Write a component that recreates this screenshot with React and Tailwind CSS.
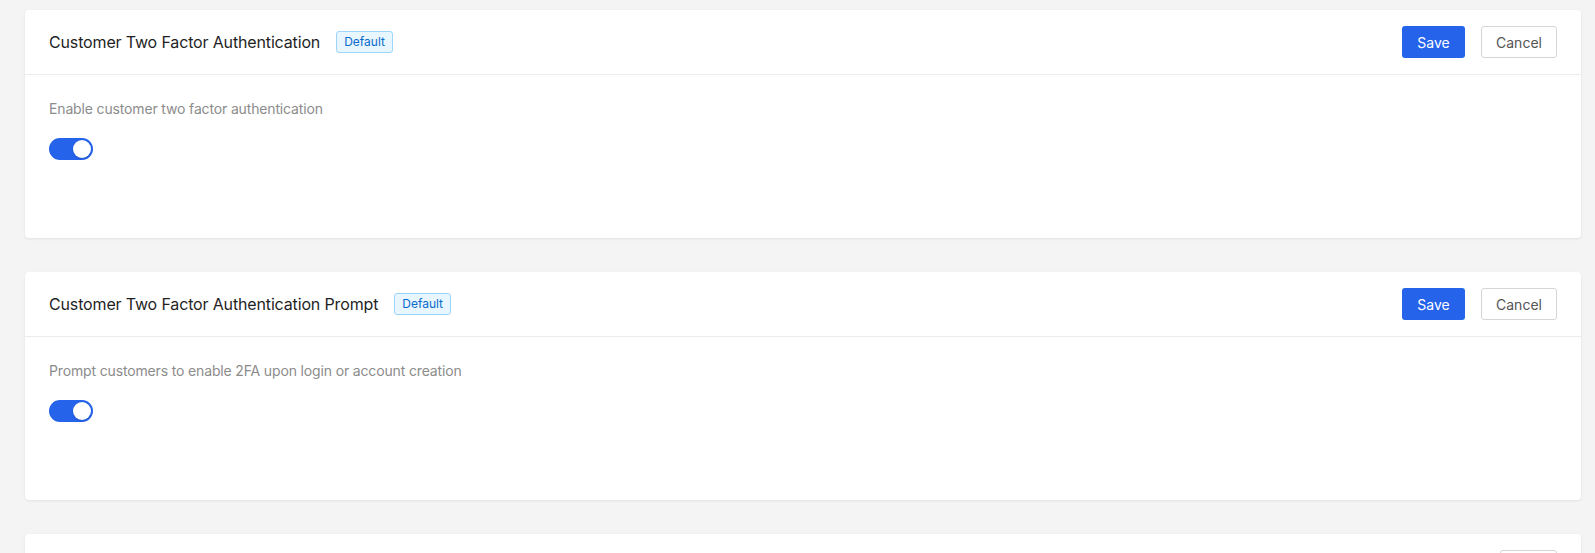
import React, { useState } from "react";

const settings = [
  {
    id: "customer_2fa",
    title: "Customer Two Factor Authentication",
    description: "Enable customer two factor authentication",
    editing: true,
  },
  {
    id: "customer_2fa_prompt",
    title: "Customer Two Factor Authentication Prompt",
    description: "Prompt customers to enable 2FA upon login or account creation",
    editing: true,
  },
  {
    id: "customer_2fa_methods",
    title: "Customer Two Factor Authentication Methods",
    description: "Allowed two factor authentication methods",
    editing: false,
  },
];

const Toggle = ({ on, onChange }) => (
  <button
    onClick={() => onChange(!on)}
    className={`relative w-[44px] h-[22px] rounded-full transition ${
      on ? "bg-[#2563eb]" : "bg-gray-300"
    }`}
  >
    <span
      className={`absolute top-[2px] w-[18px] h-[18px] rounded-full bg-white shadow-sm transition ${
        on ? "left-[24px]" : "left-[2px]"
      }`}
    />
  </button>
);

const SettingCard = ({ setting }) => {
  const [enabled, setEnabled] = useState(true);

  return (
    <div className="bg-white rounded-[4px] shadow-[0_1px_3px_rgba(0,0,0,0.08)]">
      <div className="h-[65px] px-6 flex items-center justify-between border-b border-[#ececec]">
        <div className="flex items-center gap-4">
          <h2 className="text-[16px] tracking-[-0.15px] text-[#1f1f1f]">{setting.title}</h2>
          <span className="h-[22px] px-[7px] flex items-center rounded-[3px] border border-[#9ed5fb] bg-[#e8f6ff] text-[12px] text-[#0b6bcb]">
            Default
          </span>
        </div>
        {setting.editing ? (
          <div className="flex items-center gap-4">
            <button className="h-[32px] w-[63px] rounded-[3px] bg-[#2563eb] text-white text-[14px]">
              Save
            </button>
            <button className="h-[32px] w-[76px] rounded-[3px] border border-[#d6d6d6] bg-white text-[#555] text-[14px]">
              Cancel
            </button>
          </div>
        ) : (
          <button className="h-[32px] w-[57px] rounded-[3px] border border-[#d6d6d6] bg-white text-[#555] text-[14px]">
            Edit
          </button>
        )}
      </div>
      <div className="h-[163px] px-6 pt-[24px]">
        <p className="text-[14px] leading-[20px] tracking-[-0.15px] text-[#8c8c8c]">
          {setting.description}
        </p>
        <div className="mt-[19px] flex">
          <Toggle on={enabled} onChange={setEnabled} />
        </div>
      </div>
    </div>
  );
};

const App = () => {
  return (
    <div
      className="min-h-screen bg-[#f4f4f4] pl-[25px] pr-[14px] pt-[10px] flex flex-col gap-[34px]"
      style={{ fontFamily: "Inter, 'Noto Sans', sans-serif" }}
    >
      {settings.map((s) => (
        <SettingCard key={s.id} setting={s} />
      ))}
    </div>
  );
};

export default App;
